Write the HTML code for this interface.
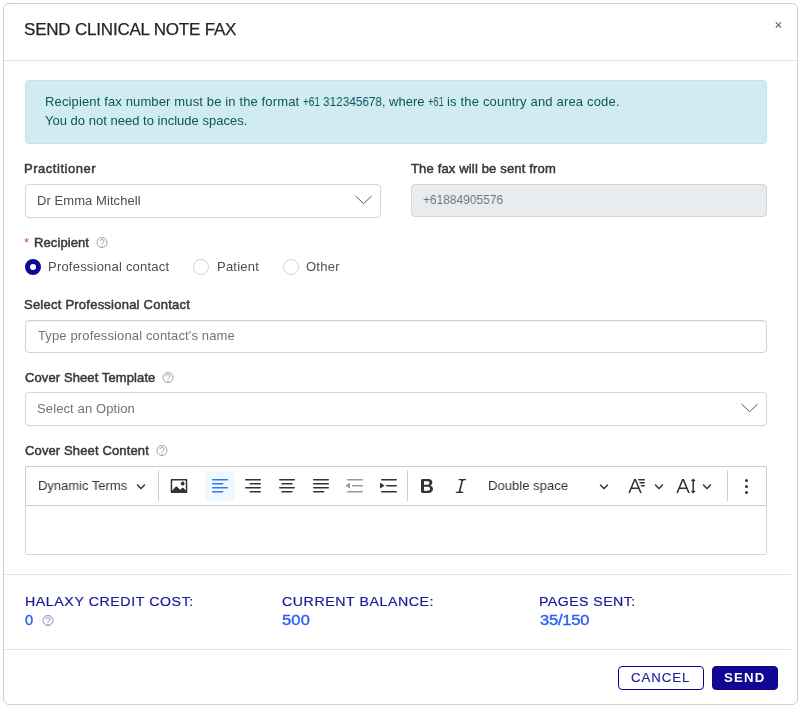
<!DOCTYPE html>
<html lang="en">
<head>
<meta charset="utf-8">
<title>Send Clinical Note Fax</title>
<style>
*{box-sizing:border-box;margin:0;padding:0}
html,body{width:800px;height:707px;background:#fff;overflow:hidden}
body{font-family:"Liberation Sans",Arial,sans-serif;font-size:13px;color:#495057;position:relative}
.abs,.t,svg{position:absolute}
.t{white-space:pre;line-height:normal;transform-origin:0 0;will-change:transform}
.modal{left:3px;top:3px;width:795px;height:702px;border:1px solid #cdcfd2;border-radius:6px;background:#fff}
.hr{height:1px;background:#dee2e6}
.alert{left:25px;top:80px;width:742px;height:64px;background:#d1ecf1;border:1px solid #bee5eb;border-radius:4px}
.field{border:1px solid #ced4da;border-radius:4px;height:33px;background:#fff}
.radio{width:16px;height:16px;border-radius:50%;border:1px solid #cdd3da;background:#fff}
.radio.on{border:5px solid #100894}
.btn{top:666px;height:24px;border-radius:4px;border:1px solid #0c0586}
.editor{left:25px;top:466px;width:742px;height:89px;border:1px solid #cfd5db;border-radius:2px;background:#fff}
.tbar{left:25px;top:466px;width:742px;height:40px;border:1px solid #ccced1;border-radius:2px 2px 0 0;background:#fff}
.tbline{left:26px;top:505px;width:740px;height:1px;background:#ced4da}
.tsep{width:1px;height:31px;background:#ccced1;top:470px}
.ico{width:20px;height:20px;top:476px;fill:#333}
.arr{width:10px;height:10px;top:481px;fill:#333}
</style>
</head>
<body>
<div class="abs modal"></div>
<div class="abs hr" style="left:4px;top:60px;width:793px"></div>
<svg style="left:774px;top:21px" width="9" height="9" viewBox="0 0 9 9"><path d="M1.8 1.4 L7 6.5 M7 1.4 L1.8 6.5" stroke="#6c7177" stroke-width="1.3" fill="none"/></svg>

<div class="abs alert"></div>

<div class="abs field" style="left:25px;top:184px;width:356px;height:34px"></div>
<svg style="left:353px;top:193px" width="22" height="14" viewBox="0 0 22 14"><path d="M2.6 3 L10.6 10.7 L18.6 3" fill="none" stroke="#495057" stroke-width=".95"/></svg>
<div class="abs field" style="left:411px;top:184px;width:356px;background:#e9ecef"></div>

<svg class="help" style="left:96px;top:237px" width="12" height="12" viewBox="0 0 12 12"><circle cx="6" cy="5.5" r="5" fill="none" stroke="#7d8388" stroke-width=".75"/><path d="M4 4.2 C4 1.9 8 1.9 8 4.1 C8 5.6 6 5.6 6 7.6" fill="none" stroke="#7d8388" stroke-width=".8"/><circle cx="6" cy="9.2" r=".55" fill="#7d8388"/></svg>

<div class="abs radio on" style="left:25px;top:259px"></div>
<div class="abs radio" style="left:193px;top:259px"></div>
<div class="abs radio" style="left:283px;top:259px"></div>

<div class="abs field" style="left:25px;top:320px;width:742px;box-shadow:inset 0 1px 1px rgba(0,0,0,.06)"></div>

<svg class="help" style="left:162px;top:372px" width="12" height="12" viewBox="0 0 12 12"><circle cx="6" cy="5.5" r="5" fill="none" stroke="#7d8388" stroke-width=".75"/><path d="M4 4.2 C4 1.9 8 1.9 8 4.1 C8 5.6 6 5.6 6 7.6" fill="none" stroke="#7d8388" stroke-width=".8"/><circle cx="6" cy="9.2" r=".55" fill="#7d8388"/></svg>
<div class="abs field" style="left:25px;top:392px;width:742px;height:34px"></div>
<svg style="left:739px;top:401px" width="22" height="14" viewBox="0 0 22 14"><path d="M2.6 3 L10.6 10.7 L18.6 3" fill="none" stroke="#495057" stroke-width=".95"/></svg>

<svg class="help" style="left:156px;top:445px" width="12" height="12" viewBox="0 0 12 12"><circle cx="6" cy="5.5" r="5" fill="none" stroke="#7d8388" stroke-width=".75"/><path d="M4 4.2 C4 1.9 8 1.9 8 4.1 C8 5.6 6 5.6 6 7.6" fill="none" stroke="#7d8388" stroke-width=".8"/><circle cx="6" cy="9.2" r=".55" fill="#7d8388"/></svg>

<div class="abs editor"></div>
<div class="abs tbar"></div>
<svg class="arr" style="left:136px" viewBox="0 0 10 10"><path d="M.941 4.523a.75.75 0 1 1 1.06-1.06l3.006 3.005 3.005-3.005a.75.75 0 1 1 1.06 1.06l-3.549 3.55a.75.75 0 0 1-1.168-.136L.941 4.523z"/></svg>
<div class="abs tsep" style="left:158px"></div>
<svg class="ico" style="left:169px" viewBox="0 0 20 20"><path d="M6.91 10.54c.26-.23.64-.21.88.03l3.36 3.14 2.23-2.06a.64.64 0 0 1 .87 0l2.52 2.97V4.5H3.2v10.12l3.71-4.08zm10.27-7.51c.6 0 1.09.47 1.09 1.05v11.84c0 .59-.49 1.06-1.09 1.06H2.79c-.6 0-1.09-.47-1.09-1.06V4.08c0-.58.49-1.05 1.1-1.05h14.38zm-5.22 5.56a1.96 1.96 0 1 1 3.4-1.96 1.96 1.96 0 0 1-3.4 1.96z"/></svg>
<div class="abs" style="left:205px;top:471px;width:30px;height:30px;border-radius:2px;background:#f0f7ff"></div>
<svg class="ico" style="left:210px;fill:#2977ff" viewBox="0 0 20 20"><path d="M2 3.75c0 .414.336.75.75.75h14.5a.75.75 0 1 0 0-1.5H2.75a.75.75 0 0 0-.75.75zm0 8c0 .414.336.75.75.75h14.5a.75.75 0 1 0 0-1.5H2.75a.75.75 0 0 0-.75.75zm0 4c0 .414.336.75.75.75h9.929a.75.75 0 1 0 0-1.5H2.75a.75.75 0 0 0-.75.75zm0-8c0 .414.336.75.75.75h9.929a.75.75 0 1 0 0-1.5H2.75a.75.75 0 0 0-.75.75z"/></svg>
<svg class="ico" style="left:243.3px" viewBox="0 0 20 20"><path d="M18 3.75a.75.75 0 0 1-.75.75H2.75a.75.75 0 1 1 0-1.5h14.5a.75.75 0 0 1 .75.75zm0 8a.75.75 0 0 1-.75.75H2.75a.75.75 0 1 1 0-1.5h14.5a.75.75 0 0 1 .75.75zm0 4a.75.75 0 0 1-.75.75H7.321a.75.75 0 1 1 0-1.5h9.929a.75.75 0 0 1 .75.75zm0-8a.75.75 0 0 1-.75.75H7.321a.75.75 0 1 1 0-1.5h9.929a.75.75 0 0 1 .75.75z"/></svg>
<svg class="ico" style="left:277.2px" viewBox="0 0 20 20"><path d="M2 3.75c0 .414.336.75.75.75h14.5a.75.75 0 1 0 0-1.5H2.75a.75.75 0 0 0-.75.75zm0 8c0 .414.336.75.75.75h14.5a.75.75 0 1 0 0-1.5H2.75a.75.75 0 0 0-.75.75zm2.286 4c0 .414.336.75.75.75h9.928a.75.75 0 1 0 0-1.5H5.036a.75.75 0 0 0-.75.75zm0-8c0 .414.336.75.75.75h9.928a.75.75 0 1 0 0-1.5H5.036a.75.75 0 0 0-.75.75z"/></svg>
<svg class="ico" style="left:311.2px" viewBox="0 0 20 20"><path d="M2 3.75c0 .414.336.75.75.75h14.5a.75.75 0 1 0 0-1.5H2.75a.75.75 0 0 0-.75.75zm0 8c0 .414.336.75.75.75h14.5a.75.75 0 1 0 0-1.5H2.75a.75.75 0 0 0-.75.75zm0 4c0 .414.336.75.75.75h9.929a.75.75 0 1 0 0-1.5H2.75a.75.75 0 0 0-.75.75zm0-8c0 .414.336.75.75.75h14.5a.75.75 0 1 0 0-1.5H2.75a.75.75 0 0 0-.75.75z"/></svg>
<svg class="ico" style="left:344.9px;opacity:.5" viewBox="0 0 20 20"><path d="M2 3.75c0 .414.336.75.75.75h14.5a.75.75 0 1 0 0-1.5H2.75a.75.75 0 0 0-.75.75zm5 6c0 .414.336.75.75.75h9.5a.75.75 0 1 0 0-1.5h-9.5a.75.75 0 0 0-.75.75zM2.75 16.5h14.5a.75.75 0 1 0 0-1.5H2.75a.75.75 0 1 0 0 1.5zm1.618-9.55L.98 9.358a.4.4 0 0 0 .013.661l3.39 2.207A.4.4 0 0 0 5 11.892V7.275a.4.4 0 0 0-.632-.326z"/></svg>
<svg class="ico" style="left:378.7px" viewBox="0 0 20 20"><path d="M2 3.75c0 .414.336.75.75.75h14.5a.75.75 0 1 0 0-1.5H2.75a.75.75 0 0 0-.75.75zm5 6c0 .414.336.75.75.75h9.5a.75.75 0 1 0 0-1.5h-9.5a.75.75 0 0 0-.75.75zM2.75 16.5h14.5a.75.75 0 1 0 0-1.5H2.75a.75.75 0 1 0 0 1.5zM1.632 6.95 5.02 9.358a.4.4 0 0 1-.013.661l-3.39 2.207A.4.4 0 0 1 1 11.892V7.275a.4.4 0 0 1 .632-.326z"/></svg>
<div class="abs tsep" style="left:407px"></div>
<svg class="ico" style="left:416.8px" viewBox="0 0 20 20"><path d="M10.187 17H5.773c-.637 0-1.092-.138-1.364-.415-.273-.277-.409-.718-.409-1.323V4.738c0-.617.14-1.062.419-1.332.279-.27.73-.406 1.354-.406h4.68c.69 0 1.288.041 1.793.124.506.083.96.242 1.36.478.341.197.644.447.906.75a3.262 3.262 0 0 1 .808 2.162c0 1.401-.722 2.426-2.167 3.075C15.05 10.175 16 11.315 16 13.01a3.756 3.756 0 0 1-2.296 3.504 6.1 6.1 0 0 1-1.517.377c-.571.073-1.238.11-2 .11zm-.217-6.217H7v4.087h3.069c1.977 0 2.965-.69 2.965-2.072 0-.707-.256-1.22-.768-1.537-.512-.319-1.277-.478-2.296-.478zM7 5.13v3.619h2.606c.729 0 1.292-.067 1.69-.2a1.6 1.6 0 0 0 .91-.765c.165-.267.247-.566.247-.897 0-.707-.26-1.176-.778-1.409-.519-.232-1.31-.348-2.375-.348H7z"/></svg>
<svg class="ico" style="left:451.1px" viewBox="0 0 20 20"><path d="m9.586 14.633.021.004c-.036.335.095.655.393.962.082.083.173.15.274.201h1.474a.6.6 0 1 1 0 1.2H5.304a.6.6 0 0 1 0-1.2h1.15c.474-.07.809-.182 1.005-.334.157-.122.291-.32.404-.597l2.416-9.55a1.053 1.053 0 0 0-.281-.823 1.12 1.12 0 0 0-.442-.296H8.15a.6.6 0 0 1 0-1.2h6.443a.6.6 0 1 1 0 1.2h-1.195c-.376.056-.65.155-.823.296-.215.175-.423.439-.623.79l-2.366 9.347z"/></svg>
<svg class="arr" style="left:599px" viewBox="0 0 10 10"><path d="M.941 4.523a.75.75 0 1 1 1.06-1.06l3.006 3.005 3.005-3.005a.75.75 0 1 1 1.06 1.06l-3.549 3.55a.75.75 0 0 1-1.168-.136L.941 4.523z"/></svg>
<svg class="ico" style="left:627.1px" viewBox="0 0 20 20"><path d="M11.03 3h6.149a.75.75 0 1 1 0 1.5h-5.514L11.03 3zm1.27 3h4.879a.75.75 0 1 1 0 1.5h-4.244L12.3 6zm1.27 3h3.609a.75.75 0 1 1 0 1.5h-2.973L13.57 9zm-2.754 2.5L8.038 4.785 5.261 11.5h5.555zm.62 1.5H4.641l-1.666 4.028H1.312l5.789-14h1.875l5.789 14h-1.663L11.436 13z"/></svg>
<svg class="arr" style="left:653.7px" viewBox="0 0 10 10"><path d="M.941 4.523a.75.75 0 1 1 1.06-1.06l3.006 3.005 3.005-3.005a.75.75 0 1 1 1.06 1.06l-3.549 3.55a.75.75 0 0 1-1.168-.136L.941 4.523z"/></svg>
<svg class="ico" style="left:675.7px" viewBox="0 0 20 20"><path d="M9.816 11.5 7.038 4.785 4.261 11.5h5.555zm.62 1.5H3.641l-1.666 4.028H.312l5.789-14h1.875l5.789 14h-1.663L10.436 13zm7.55 2.279.779-.779.707.707-2.265 2.265-2.193-2.265.707-.707.765.765V4.825c0-.042 0-.083.002-.123l-.77.77-.707-.707L17.207 2.5l2.265 2.265-.707.707-.782-.782c.002.043.002.089.002.135v10.454z"/></svg>
<svg class="arr" style="left:702.3px" viewBox="0 0 10 10"><path d="M.941 4.523a.75.75 0 1 1 1.06-1.06l3.006 3.005 3.005-3.005a.75.75 0 1 1 1.06 1.06l-3.549 3.55a.75.75 0 0 1-1.168-.136L.941 4.523z"/></svg>
<div class="abs tsep" style="left:727px"></div>
<svg class="ico" style="left:736.9px" viewBox="0 0 20 20"><circle cx="9.5" cy="4.5" r="1.5"/><circle cx="9.5" cy="10.5" r="1.5"/><circle cx="9.5" cy="16.5" r="1.5"/></svg>


<div class="abs hr" style="left:4px;top:574px;width:787px"></div>
<svg class="help" style="left:41.5px;top:615px" width="12" height="12" viewBox="0 0 12 12"><circle cx="6" cy="5.5" r="5" fill="none" stroke="#6466b8" stroke-width=".75"/><path d="M4 4.2 C4 1.9 8 1.9 8 4.1 C8 5.6 6 5.6 6 7.6" fill="none" stroke="#6466b8" stroke-width=".8"/><circle cx="6" cy="9.2" r=".55" fill="#6466b8"/></svg>
<div class="abs hr" style="left:4px;top:649px;width:787px"></div>

<div class="abs btn" style="left:618px;width:86px;background:#fff"></div>
<div class="abs btn" style="left:712px;width:66px;background:#100894"></div>

<div class="t" style="left:24.02px;top:20px;font-size:17px;color:#212529;letter-spacing:-0.201px;-webkit-text-stroke:0.25px #212529;">SEND CLINICAL NOTE FAX</div>
<div class="t" style="left:45.30px;top:94px;font-size:13px;color:#0c5460;letter-spacing:0.136px;">Recipient fax number must be in the format</div>
<div class="t" style="left:303.46px;top:94px;font-size:13px;color:#0c5460;transform:scaleX(0.7674);">+61</div>
<div class="t" style="left:323.19px;top:94px;font-size:13px;color:#0c5460;transform:scaleX(0.9065);">312345678,</div>
<div class="t" style="left:388.90px;top:94px;font-size:13px;color:#0c5460;letter-spacing:0.025px;">where</div>
<div class="t" style="left:428.39px;top:94px;font-size:13px;color:#0c5460;transform:scaleX(0.7150);">+61</div>
<div class="t" style="left:446.50px;top:94px;font-size:13px;color:#0c5460;letter-spacing:0.174px;">is the country and area code.</div>
<div class="t" style="left:45.46px;top:113px;font-size:13px;color:#0c5460;letter-spacing:0.014px;">You do not need to include spaces.</div>
<div class="t" style="left:24.32px;top:161px;font-size:13px;color:#343a40;letter-spacing:0.534px;-webkit-text-stroke:0.5px #343a40;">Practitioner</div>
<div class="t" style="left:36.50px;top:192.5px;font-size:13px;color:#495057;letter-spacing:0.071px;">Dr Emma Mitchell</div>
<div class="t" style="left:411.20px;top:161px;font-size:13px;color:#343a40;letter-spacing:0.160px;-webkit-text-stroke:0.5px #343a40;">The fax will be sent from</div>
<div class="t" style="left:423.27px;top:192px;font-size:13px;color:#6c757d;transform:scaleX(0.9186);">+61884905576</div>
<div class="t" style="left:24.45px;top:235px;font-size:13px;color:#e4434f;">*</div>
<div class="t" style="left:33.52px;top:235px;font-size:13px;color:#343a40;letter-spacing:0.098px;-webkit-text-stroke:0.5px #343a40;">Recipient</div>
<div class="t" style="left:47.80px;top:259px;font-size:13px;color:#495057;letter-spacing:0.211px;">Professional contact</div>
<div class="t" style="left:216.50px;top:259px;font-size:13px;color:#495057;letter-spacing:0.222px;">Patient</div>
<div class="t" style="left:306.43px;top:259px;font-size:13px;color:#495057;letter-spacing:0.255px;">Other</div>
<div class="t" style="left:24.29px;top:297px;font-size:13px;color:#343a40;letter-spacing:0.235px;-webkit-text-stroke:0.5px #343a40;">Select Professional Contact</div>
<div class="t" style="left:37.80px;top:328px;font-size:13px;color:#6c757d;letter-spacing:0.135px;">Type professional contact's name</div>
<div class="t" style="left:24.68px;top:370px;font-size:13px;color:#343a40;letter-spacing:0.102px;-webkit-text-stroke:0.5px #343a40;">Cover Sheet Template</div>
<div class="t" style="left:36.50px;top:401px;font-size:13px;color:#6c757d;letter-spacing:0.114px;">Select an Option</div>
<div class="t" style="left:24.68px;top:443px;font-size:13px;color:#343a40;letter-spacing:0.130px;-webkit-text-stroke:0.5px #343a40;">Cover Sheet Content</div>
<div class="t" style="left:38.02px;top:478px;font-size:13.5px;color:#333;transform:scaleX(0.9611);">Dynamic Terms</div>
<div class="t" style="left:488.02px;top:478px;font-size:13.5px;color:#333;transform:scaleX(0.9705);">Double space</div>
<div class="t" style="left:24.55px;top:594px;font-size:13.5px;color:#1b1b9c;letter-spacing:0.553px;transform:scaleX(1.0500);-webkit-text-stroke:0.22px #1b1b9c;">HALAXY CREDIT COST:</div>
<div class="t" style="left:25.12px;top:611.7px;font-size:14px;color:#2f62f0;transform:scaleX(1.0451);-webkit-text-stroke:0.4px #2f62f0;">0</div>
<div class="t" style="left:281.97px;top:594px;font-size:13.5px;color:#1b1b9c;letter-spacing:0.535px;transform:scaleX(1.0500);-webkit-text-stroke:0.22px #1b1b9c;">CURRENT BALANCE:</div>
<div class="t" style="left:282.06px;top:611.7px;font-size:14px;color:#2f62f0;letter-spacing:0.127px;transform:scaleX(1.1800);-webkit-text-stroke:0.4px #2f62f0;">500</div>
<div class="t" style="left:538.95px;top:594px;font-size:13.5px;color:#1b1b9c;letter-spacing:0.414px;transform:scaleX(1.0500);-webkit-text-stroke:0.22px #1b1b9c;">PAGES SENT:</div>
<div class="t" style="left:539.66px;top:611.7px;font-size:14px;color:#2f62f0;letter-spacing:-0.198px;transform:scaleX(1.1800);-webkit-text-stroke:0.4px #2f62f0;">35/150</div>
<div class="t" style="left:631.26px;top:671px;font-size:12px;color:#1b1b9c;letter-spacing:0.875px;transform:scaleX(1.1000);-webkit-text-stroke:0.15px #1b1b9c;">CANCEL</div>
<div class="t" style="left:723.79px;top:671px;font-size:12px;color:#fff;font-weight:bold;letter-spacing:1.125px;transform:scaleX(1.1000);">SEND</div>
</body>
</html>
